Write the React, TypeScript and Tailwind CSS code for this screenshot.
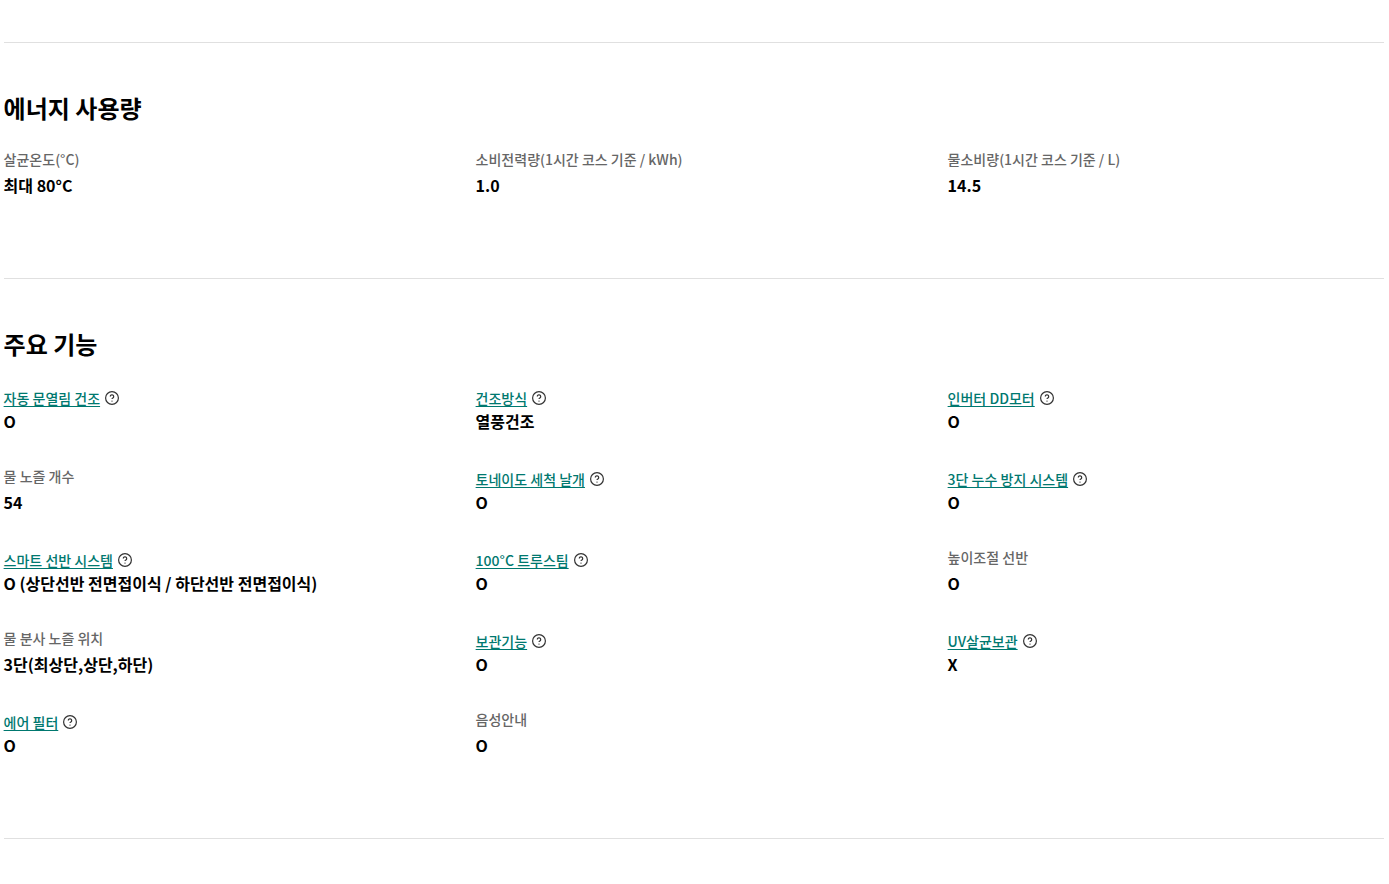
const energy = [
  { label: '살균온도(°C)', value: '최대 80°C' },
  { label: '소비전력량(1시간 코스 기준 / kWh)', value: '1.0' },
  { label: '물소비량(1시간 코스 기준 / L)', value: '14.5' },
];

const features = [
  { label: '자동 문열림 건조', value: 'O', link: true },
  { label: '건조방식', value: '열풍건조', link: true },
  { label: '인버터 DD모터', value: 'O', link: true },
  { label: '물 노즐 개수', value: '54' },
  { label: '토네이도 세척 날개', value: 'O', link: true },
  { label: '3단 누수 방지 시스템', value: 'O', link: true },
  { label: '스마트 선반 시스템', value: 'O (상단선반 전면접이식 / 하단선반 전면접이식)', link: true },
  { label: '100°C 트루스팀', value: 'O', link: true },
  { label: '높이조절 선반', value: 'O' },
  { label: '물 분사 노즐 위치', value: '3단(최상단,상단,하단)' },
  { label: '보관기능', value: 'O', link: true },
  { label: 'UV살균보관', value: 'X', link: true },
  { label: '에어 필터', value: 'O', link: true },
  { label: '음성안내', value: 'O' },
];

function HelpIcon() {
  return (
    <svg width="14" height="14" viewBox="0 0 14 14" fill="none" className="ml-[5px] shrink-0">
      <circle cx="7" cy="7" r="6.4" stroke="#333" strokeWidth="1.2" />
      <path d="M5.3 5.6a1.7 1.7 0 1 1 2.6 1.4c-.6.4-.9.6-.9 1.1" stroke="#333" strokeWidth="1.2" />
      <circle cx="7" cy="10.1" r=".7" fill="#333" />
    </svg>
  );
}

function Spec({ label, value, link }: { label: string; value: string; link?: boolean }) {
  return (
    <div className="h-[81px]">
      {link ? (
        <div className="flex items-center h-[24px] pt-[2px] text-sm font-medium leading-[22px]">
          <a className="text-[#00786f] underline underline-offset-2">{label}</a>
          <HelpIcon />
        </div>
      ) : (
        <div className="h-[24px] -mt-[2px] mb-[2px] text-sm font-medium leading-[24px] text-[#666]">{label}</div>
      )}
      <div className="text-base font-bold leading-[24px] text-black">{value}</div>
    </div>
  );
}

export default function App() {
  return (
    <div className="min-h-[884px] bg-white pl-1 pr-[5px] pt-[42px] font-['Noto_Sans_CJK_KR','Noto_Sans',sans-serif]">
      {/* 에너지 사용량 */}
      <section className="h-[236px] border-t border-[#e0e0e0] pt-[47px]">
        <h2 className="-ml-[0.4px] text-2xl font-bold leading-[36px] text-black">에너지 사용량</h2>
        <div className="-ml-[0.4px] mt-[21px] grid grid-cols-[472px_472px_1fr]">
          {energy.map((item) => (
            <div key={item.label}>
              <div className="text-sm font-medium leading-[24px] text-[#666]">{item.label}</div>
              <div className="mt-[2px] text-base font-bold leading-[24px] text-black">{item.value}</div>
            </div>
          ))}
        </div>
      </section>

      {/* 주요 기능 */}
      <section className="h-[560px] border-t border-[#e0e0e0] pt-[47px]">
        <h2 className="-ml-[0.4px] text-2xl font-bold leading-[36px] text-black">주요 기능</h2>
        <div className="-ml-[0.4px] mt-[23px] grid grid-cols-[472px_472px_1fr]">
          {features.map((item) => (
            <Spec key={item.label} {...item} />
          ))}
        </div>
      </section>

      <div className="border-t border-[#e0e0e0]" />
    </div>
  );
}
